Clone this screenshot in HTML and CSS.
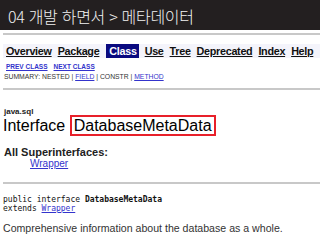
FILE: index.html
```html
<!DOCTYPE html>
<html lang="ko">
<head>
    <meta charset="UTF-8">
    <meta name="viewport" content="width=device-width, initial-scale=1.0">
    <title>메타데이터</title>
    <link rel="stylesheet" href="styles.css">
</head>
<body>
    <!-- Slide title bar -->
    <div class="title-bar">04 개발 하면서 &gt; 메타데이터</div>

    <!-- Javadoc page capture -->
    <div class="doc">
        <hr class="rule top-rule">

        <div class="nav-bar">
            <a href="#">Overview</a>
            <a href="#">Package</a>
            <span class="nav-current">Class</span>
            <a href="#">Use</a>
            <a href="#">Tree</a>
            <a href="#">Deprecated</a>
            <a href="#">Index</a>
            <a href="#">Help</a>
        </div>

        <div class="sub-nav">
            <a href="#">PREV CLASS</a>
            <a href="#">NEXT CLASS</a>
        </div>
        <div class="summary">SUMMARY: NESTED | <a href="#">FIELD</a> | CONSTR | <a href="#">METHOD</a></div>

        <hr class="rule">

        <div class="package-name">java.sql</div>
        <h2 class="class-title">Interface <span class="highlight">DatabaseMetaData</span></h2>

        <div class="supers">
            <div class="supers-label">All Superinterfaces:</div>
            <a class="supers-link" href="#">Wrapper</a>
        </div>

        <hr class="rule">

        <pre class="signature">public interface <b>DatabaseMetaData</b>
extends <a href="#">Wrapper</a></pre>

        <p class="description">Comprehensive information about the database as a whole.</p>
    </div>
</body>
</html>
```

FILE: styles.css
```css
/* Page basics */
body {
    margin: 0;
    padding: 0;
    background-color: #fff;
    font-family: "Liberation Sans", Arial, sans-serif;
    color: #222;
    width: 320px;
    height: 240px;
    overflow: hidden;
}

/* Dark slide title */
.title-bar {
    height: 30px;
    background-color: #231f20;
    color: #f2f2f2;
    font-family: "Noto Sans CJK KR", "Noto Sans", sans-serif;
    font-size: 16px;
    font-weight: 300;
    line-height: 32px;
    padding-left: 8px;
    letter-spacing: -0.3px;
}

.doc {
    padding: 0 0 0 3px;
}

/* Gray horizontal lines */
.rule {
    border: none;
    border-top: 2px solid #c8c8c8;
    margin: 0;
}

.top-rule {
    margin-top: 3px;
}

/* Top navigation row */
.nav-bar {
    display: flex;
    align-items: center;
    gap: 6px;
    margin-top: 9px;
    padding-left: 3px;
    height: 14px;
    font-size: 10.8px;
    font-weight: bold;
    letter-spacing: -0.3px;
    background-color: #f4f4fb;
}

.nav-bar a {
    color: #111;
}

.nav-current {
    background-color: #0a0a80;
    color: #fff;
    padding: 0 2px 0 3px;
    margin-left: 1px;
    line-height: 14px;
}

/* Prev / next links */
.sub-nav {
    display: flex;
    gap: 6px;
    margin-top: 5px;
    padding-left: 3px;
    font-size: 6.5px;
    font-weight: bold;
    line-height: 8px;
}

.sub-nav a,
.summary a {
    color: #3333cc;
}

.summary {
    font-size: 6.8px;
    line-height: 8px;
    margin-top: 2px;
    margin-bottom: 7px;
    padding-left: 1px;
    color: #333;
}

/* Class heading */
.package-name {
    margin-top: 17px;
    font-size: 8px;
    font-weight: bold;
    line-height: 9px;
    padding-left: 1px;
}

.class-title {
    margin: 0;
    font-size: 16px;
    font-weight: normal;
    line-height: 20px;
    color: #000;
}

.highlight {
    border: 2px solid #e8202a;
    padding: 0 2px;
}

/* Superinterfaces */
.supers {
    margin-top: 11px;
    margin-bottom: 13px;
    padding-left: 1px;
}

.supers-label {
    font-size: 11px;
    font-weight: bold;
    line-height: 11px;
}

.supers-link {
    display: block;
    margin-left: 26px;
    font-size: 10px;
    line-height: 11px;
    color: #3333cc;
}

/* Declaration */
.signature {
    margin: 11px 0 0 0;
    font-family: "DejaVu Sans Mono", monospace;
    font-size: 8px;
    line-height: 9px;
    color: #111;
}

.signature a {
    color: #3333cc;
}

.description {
    margin: 9px 0 0 0;
    font-size: 10.6px;
    color: #333;
}
```
